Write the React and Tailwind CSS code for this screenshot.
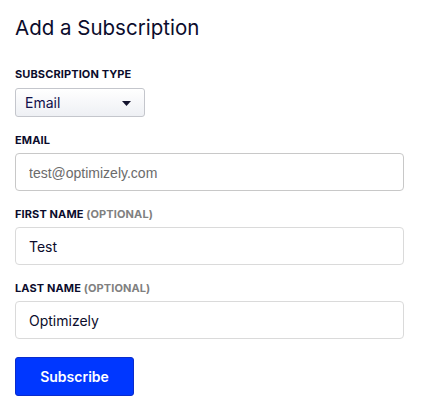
import { useState } from 'react'

const fields = [
  { id: 'email', label: 'Email', placeholder: 'test@optimizely.com', value: '' },
  { id: 'first', label: 'First Name', optional: true, value: 'Test' },
  { id: 'last', label: 'Last Name', optional: true, value: 'Optimizely' },
]

function Label({ children, optional }) {
  return (
    <div className="text-[11px] leading-4 font-bold uppercase tracking-[0.01em] text-[#0b0c2c] mb-[5px]">
      {children}
      {optional && <span className="text-[#808080]"> (Optional)</span>}
    </div>
  )
}

export default function App() {
  const [values, setValues] = useState(() => Object.fromEntries(fields.map((f) => [f.id, f.value])))

  return (
    <div className="min-h-[410px] bg-white pl-[15px] pr-[37px] pt-[14px] font-['Inter','Noto_Sans',sans-serif] text-[#0b0c2c]">
      <h1 className="text-[20.5px] leading-7 font-normal">Add a Subscription</h1>

      <div className="mt-6">
        <div className="mb-[6px]">
          <Label>Subscription Type</Label>
        </div>
        <button
          type="button"
          className="flex items-center justify-between w-[130px] h-[29px] pl-[9px] pr-[13px] rounded-[3px] border border-[#c4c6cc] bg-gradient-to-b from-white to-[#eef0f4] text-[14px] text-[#10104a]"
        >
          <span>Email</span>
          <svg width="9" height="5" viewBox="0 0 9 5" className="mt-px">
            <path d="M0 0h9L4.5 5z" fill="#14142e" />
          </svg>
        </button>
      </div>

      {fields.map((f) => (
        <div key={f.id} className="mt-[15px]">
          <Label optional={f.optional}>{f.label}</Label>
          <input
            className={`block w-full h-[38px] px-[13px] rounded-[4px] border bg-white text-[14px] text-[#0b0c2c] placeholder:text-[#6b6b6b] placeholder:font-['Liberation_Sans','Arial',sans-serif] outline-none ${
              f.id === 'email' ? 'border-[#c8c8c8]' : 'border-[#dadada]'
            }`}
            placeholder={f.placeholder}
            value={values[f.id]}
            onChange={(e) => setValues({ ...values, [f.id]: e.target.value })}
          />
        </div>
      ))}

      <button
        type="button"
        className="mt-[18px] w-[119px] h-[39px] rounded-[3px] border border-[#0a2ccc] bg-[#0037ff] text-white text-[14px] font-semibold"
      >
        Subscribe
      </button>
    </div>
  )
}
